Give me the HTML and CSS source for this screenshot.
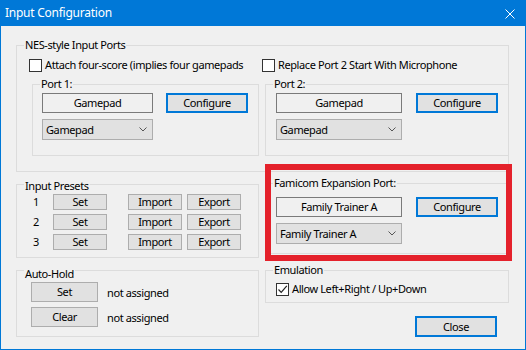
FILE: index.html
```html
<!DOCTYPE html>
<html>
<head>
<meta charset="utf-8">
<link rel="stylesheet" href="styles.css">
</head>
<body>
<div class="window">
  <div class="titlebar">
    <span class="title">Input Configuration</span>
    <svg class="close-x" width="10" height="10" viewBox="0 0 10 10"><path d="M0.5 0.5 L9.5 9.5 M9.5 0.5 L0.5 9.5" stroke="#fff" stroke-width="1" fill="none"/></svg>
  </div>
  <div class="client">
    <div class="group nes">
      <div class="glabel">NES-style Input Ports</div>
      <div class="check-row">
        <div class="check c1"><span class="box"></span><span>Attach four-score (implies four gamepads</span></div>
        <div class="check"><span class="box"></span><span>Replace Port 2 Start With Microphone</span></div>
      </div>
      <div class="ports">
        <div class="group port port1">
          <div class="glabel">Port 1:</div>
          <div class="port-row">
            <div class="static">Gamepad</div>
            <div class="btn default cfg">Configure</div>
          </div>
          <div class="combo">Gamepad<svg class="chev" width="8" height="5" viewBox="0 0 8 5"><path d="M0.5 0.5 L4 4 L7.5 0.5" stroke="#555" fill="none"/></svg></div>
        </div>
        <div class="group port port2">
          <div class="glabel">Port 2:</div>
          <div class="port-row">
            <div class="static">Gamepad</div>
            <div class="btn default cfg">Configure</div>
          </div>
          <div class="combo">Gamepad<svg class="chev" width="8" height="5" viewBox="0 0 8 5"><path d="M0.5 0.5 L4 4 L7.5 0.5" stroke="#555" fill="none"/></svg></div>
        </div>
      </div>
    </div>
    <div class="lower">
      <div class="col left">
        <div class="group presets">
          <div class="glabel">Input Presets</div>
          <div class="preset-row"><span class="num">1</span><div class="btn small set">Set</div><div class="btn small imp">Import</div><div class="btn small exp">Export</div></div>
          <div class="preset-row"><span class="num">2</span><div class="btn small set">Set</div><div class="btn small imp">Import</div><div class="btn small exp">Export</div></div>
          <div class="preset-row"><span class="num">3</span><div class="btn small set">Set</div><div class="btn small imp">Import</div><div class="btn small exp">Export</div></div>
        </div>
        <div class="group autohold">
          <div class="glabel">Auto-Hold</div>
          <div class="ah-row"><div class="btn ah">Set</div><span>not assigned</span></div>
          <div class="ah-row"><div class="btn ah">Clear</div><span>not assigned</span></div>
        </div>
      </div>
      <div class="col right">
        <div class="group famicom">
          <div class="glabel">Famicom Expansion Port:</div>
          <div class="port-row">
            <div class="static">Family Trainer A</div>
            <div class="btn default cfg">Configure</div>
          </div>
          <div class="combo">Family Trainer A<svg class="chev" width="8" height="5" viewBox="0 0 8 5"><path d="M0.5 0.5 L4 4 L7.5 0.5" stroke="#555" fill="none"/></svg></div>
        </div>
        <div class="group emulation">
          <div class="glabel">Emulation</div>
          <div class="check"><span class="box checked"><svg width="11" height="11" viewBox="0 0 11 11"><path d="M1.5 5.5 L4.2 8.3 L9.8 1.8" stroke="#222" stroke-width="1.2" fill="none"/></svg></span><span>Allow Left+Right / Up+Down</span></div>
        </div>
        <div class="btn default close">Close</div>
      </div>
    </div>
  </div>
  <div class="highlight"></div>
</div>
</body>
</html>
```
FILE: styles.css
```css
* { box-sizing: border-box; }
html, body { margin: 0; padding: 0; }
body {
  font-family: "Noto Sans", sans-serif;
  font-size: 11px;
  letter-spacing: -0.4px;
  color: #000;
  background: #fff;
}
.window {
  position: relative;
  width: 526px;
  height: 350px;
  border: 1px solid #0078d7;
  background: #f0f0f0;
  overflow: hidden;
}
.titlebar {
  background: #0078d7;
  display: flex;
  align-items: center;
  justify-content: space-between;
  padding-left: 4px;
  margin-top: -1px;
  height: 26px;
}
.title {
  color: #fff;
  font-size: 12px;
  letter-spacing: -0.25px;
  line-height: 16px;
}
.close-x { margin-right: 10px; margin-top: 1px; }

.client { padding-left: 15px; }

.group { border: 1px solid #dcdcdc; }
.glabel {
  display: table;
  margin: -9px 0 0 7px;
  padding: 0 1px;
  background: #f0f0f0;
  line-height: 16px;
  height: 16px;
  white-space: nowrap;
}

.nes {
  width: 493px;
  margin-top: 19px;
  padding-bottom: 15px;
}
.check-row {
  display: flex;
  margin-top: 4px;
  padding-left: 12px;
  height: 16px;
}
.check {
  display: flex;
  align-items: center;
  gap: 3px;
  line-height: 16px;
  white-space: nowrap;
}
.c1 { width: 233px; }
.box {
  width: 13px;
  height: 13px;
  border: 1px solid #333;
  background: #fff;
  display: flex;
  align-items: center;
  justify-content: center;
  flex: none;
}
.ports {
  display: flex;
  margin-top: 11px;
  padding-left: 15px;
  gap: 6px;
}
.port { height: 72px; }
.port1 { width: 227px; }
.port2 { width: 244px; margin-right: -1px; }
.port1 .port-row, .port1 .combo { margin-left: 9px; }
.port2 .port-row, .port2 .combo,
.famicom .port-row, .famicom .combo { margin-left: 10px; }
.port1 .static, .port1 .combo { width: 111px; }
.port2 .static, .port2 .combo, .famicom .static, .famicom .combo { width: 126px; }
.port1 .cfg { margin-left: 13px; }
.port2 .cfg, .famicom .cfg { margin-left: 14px; }

.port-row { display: flex; margin-top: 1px; }
.static {
  height: 20px;
  border: 1px solid #7a7a7a;
  text-align: center;
  line-height: 16px;
  padding-top: 1px;
  white-space: nowrap;
}
.btn {
  display: flex;
  align-items: center;
  justify-content: center;
  background: #e1e1e1;
  border: 1px solid #adadad;
  white-space: nowrap;
  line-height: 14px;
}
.btn.default { border: 2px solid #0078d7; }
.cfg { width: 82px; height: 20px; }
.combo {
  margin-top: 6px;
  height: 21px;
  border: 1px solid #adadad;
  background: #e1e1e1;
  display: flex;
  align-items: center;
  justify-content: space-between;
  padding: 0 5px 0 3px;
  white-space: nowrap;
}

.lower { display: flex; gap: 6px; }
.col { display: flex; flex-direction: column; }
.left { width: 243px; }
.right { width: 244px; }

.presets {
  margin-top: 12px;
  height: 74px;
  padding-top: 2px;
}
.preset-row {
  display: flex;
  align-items: center;
  height: 16px;
  margin-bottom: 4px;
}
.num {
  width: 36px;
  padding-left: 16px;
  line-height: 16px;
}
.small { width: 54px; height: 16px; }
.imp { margin-left: 21px; }
.exp { margin-left: 5px; }

.autohold {
  margin-top: 12px;
  height: 67px;
  padding-top: 4px;
}
.ah-row {
  display: flex;
  align-items: center;
  gap: 9px;
  margin: 0 0 5px 14px;
}
.ah { width: 67px; height: 20px; }

.famicom { margin-top: 11px; height: 71px; }
.famicom .port-row { margin-top: 6px; }

.emulation { margin-top: 16px; height: 33px; }
.emulation .check { margin: 3px 0 0 10px; height: 16px; }

.close {
  width: 82px;
  height: 21px;
  margin-top: 13px;
  align-self: flex-end;
  margin-right: 12px;
}

.highlight {
  position: absolute;
  left: 264px;
  top: 163px;
  width: 247px;
  height: 97px;
  border: 6px solid #e4212b;
}
```
